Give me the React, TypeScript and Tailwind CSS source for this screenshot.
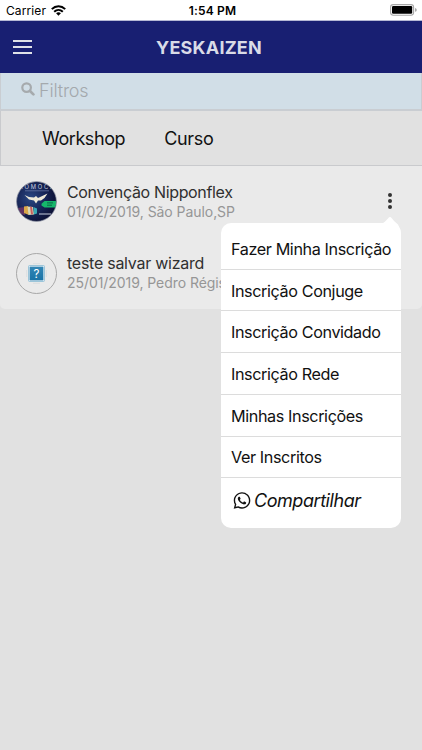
import React from "react";
import { FaWhatsapp } from "react-icons/fa";

const EVENTS = [
  { id: 1, title: "Convenção Nipponflex", info: "01/02/2019, São Paulo,SP", titleClass: "tracking-[-0.34px]" },
  { id: 2, title: "teste salvar wizard", info: "25/01/2019, Pedro Régis,PB", titleClass: "tracking-[-0.26px]" },
];

const MENU_ITEMS = [
  { label: "Fazer Minha Inscrição", className: "h-[46.5px] pt-[7px]" },
  { label: "Inscrição Conjuge", className: "h-[41.8px] pt-[2px]" },
  { label: "Inscrição Convidado", className: "h-[41.8px] pt-[1px]" },
  { label: "Inscrição Rede", className: "h-[41.8px] pt-[2px]" },
  { label: "Minhas Inscrições", className: "h-[41.8px] pt-[2px]" },
  { label: "Ver Inscritos", className: "h-[41.8px] pt-[1px]" },
];

const WifiIcon = () => (
  <svg width="15" height="11" viewBox="0 0 15 11" fill="none" stroke="#000" strokeWidth="2">
    <path d="M0.8 4.1C4.6 0.3 10.4 0.3 14.2 4.1" />
    <path d="M3.2 6.7C5.7 4.3 9.3 4.3 11.8 6.7" />
    <path d="M7.5 10.7L5.1 8.3C6.5 7 8.5 7 9.9 8.3Z" fill="#000" stroke="none" />
  </svg>
);

const BatteryIcon = () => (
  <svg width="28" height="12" viewBox="0 0 28 12">
    <rect x="0.6" y="0.6" width="23" height="10.6" rx="2.6" fill="none" stroke="#a8a8a8" strokeWidth="1.1" />
    <rect x="2" y="2" width="20.2" height="7.8" rx="1.2" fill="#000" />
    <path d="M25 4Q26.8 4.4 26.8 5.9T25 7.8Z" fill="#a8a8a8" />
  </svg>
);

const SearchIcon = () => (
  <svg className="mb-[2px] mr-[4px]" width="14" height="14" viewBox="0 0 14 14" fill="none" stroke="#a6aaad">
    <circle cx="5.6" cy="5.6" r="4.3" strokeWidth="2.2" />
    <path d="M9 9L12.4 12.4" strokeWidth="2.7" strokeLinecap="round" />
  </svg>
);

const EventAvatar = () => (
  <svg width="41" height="41" viewBox="0 0 41 41">
    <defs>
      <clipPath id="avatar">
        <circle cx="20.5" cy="20.5" r="19.8" />
      </clipPath>
      <radialGradient id="sky" cx="0.36" cy="0.42" r="0.6">
        <stop offset="0" stopColor="#294783" />
        <stop offset="0.6" stopColor="#172556" />
        <stop offset="1" stopColor="#0d1238" />
      </radialGradient>
    </defs>
    <g clipPath="url(#avatar)">
      <rect width="41" height="41" fill="url(#sky)" />
      <text x="3" y="7.8" fontSize="5.8" fontFamily="Inter, sans-serif" fill="#c6cde0" textLength="35">ROMOCA</text>
      <path d="M9 9.8H33" stroke="#7181ad" strokeWidth="0.7" />
      <path d="M8.5 14L13 16L18 16.5L20 15L22 17L31.5 12.5L28.5 17L25 19.5L22 19.5L20 22.5L18 19.5L13 18.5Z" fill="#ede9d8" />
      <path d="M25.5 22.8L28.5 20H41V26.5H28.5L25.5 24.5Z" fill="#15b86b" />
      <path d="M31 21.9H37M31 24.2H36" stroke="#0b6748" strokeWidth="1" />
      <path d="M1 27L9 26V34L4 33Z" fill="#613360" />
      <path d="M8 25.5L12 25L13 34L8 32Z" fill="#d9a84a" />
      <path d="M11.5 25.5L17 26L18 33.5L12.5 34Z" fill="#d9d6b4" />
      <path d="M14 25.5L16 26L17 33L15 33.5Z" fill="#c95f60" />
      <path d="M17.5 26L21 27.5V32.5L18 33.5Z" fill="#38a8b5" />
      <path d="M23 33H35" stroke="#c6cddd" strokeWidth="1" />
    </g>
    <circle cx="20.5" cy="20.5" r="19.9" fill="none" stroke="#777c91" strokeWidth="0.7" />
  </svg>
);

const PlaceholderAvatar = () => (
  <svg width="41" height="41" viewBox="0 0 41 41">
    <defs>
      <linearGradient id="tile" x1="0" y1="0" x2="0" y2="1">
        <stop offset="0" stopColor="#3386b5" />
        <stop offset="1" stopColor="#1973a6" />
      </linearGradient>
    </defs>
    <circle cx="20.5" cy="20.5" r="20" fill="none" stroke="#a0a0a0" strokeWidth="0.9" />
    <path d="M17 10.7H24M17 30.3H24M10.7 17V24M30.3 17V24" stroke="#d6dadd" strokeWidth="0.8" />
    <rect x="12.5" y="12.5" width="16" height="16" rx="1" fill="#f4fafd" stroke="#87b9d2" strokeWidth="0.8" />
    <rect x="13.6" y="13.6" width="13.8" height="13.8" fill="url(#tile)" />
    <text x="20.5" y="24.6" textAnchor="middle" fontSize="11.5" fontFamily="Inter, sans-serif" fill="#fff">?</text>
  </svg>
);

const ActionMenu = () => (
  <div className="absolute left-[221px] top-[223px] w-[180px] text-[16.2px] text-[#111]">
    <svg className="absolute left-[160px] -top-[7px]" width="20" height="20" viewBox="0 0 20 20">
      <path d="M0 7.5C3 7.2 5 4.7 7.2 2.2Q9 0 10.8 2.2Q13 5.5 17 8.5L19.5 14V20H0Z" fill="#fff" />
    </svg>
    <div className="relative h-[304.5px] overflow-hidden rounded-[10px] bg-white">
      {MENU_ITEMS.map((item) => (
        <div key={item.label} className={`flex items-center whitespace-nowrap border-b border-[#dcdcdc] pl-[10px] tracking-[-0.4px] ${item.className}`}>
          {item.label}
        </div>
      ))}
      <div className="flex h-[45px] items-center pl-[12px]">
        <FaWhatsapp className="mr-[3px] h-[19px] w-[18px]" />
        <span className="text-[18px] italic tracking-[-0.45px]">Compartilhar</span>
      </div>
    </div>
  </div>
);

const App = () => {
  return (
    <div className="relative h-[750px] w-[422px] overflow-hidden bg-[#e1e1e1] font-['Inter',sans-serif]">
      {/* Status bar */}
      <div className="grid h-[21px] grid-cols-3 items-center border-b border-[#b5b9d5] bg-white pl-[6px] pr-[4px] text-[12px] text-black">
        <div className="flex items-center gap-[5px] pt-px">
          <span className="tracking-[0.1px]">Carrier</span>
          <WifiIcon />
        </div>
        <span className="pl-px pt-px text-center text-[12px] font-semibold tracking-[0.2px]">1:54 PM</span>
        <div className="flex justify-end">
          <BatteryIcon />
        </div>
      </div>

      {/* Header */}
      <header className="grid h-[52px] grid-cols-3 items-center bg-[#181f72] pl-[13px] pr-[17px]">
        <button className="flex w-[19px] flex-col gap-[4px]">
          <span className="h-[2px] bg-[#dfe1e8]" />
          <span className="h-[2px] bg-[#dfe1e8]" />
          <span className="h-[2px] bg-[#dfe1e8]" />
        </button>
        <h1 className="text-center text-[18px] font-bold tracking-[0.22px] text-[#d9dbe7]">YESKAIZEN</h1>
      </header>

      {/* Filter */}
      <div className="flex h-[38px] items-center border-x border-b-2 border-[#c9cdd2] bg-[#d1dee7] pb-[2px] pl-[20px] text-[#a4a9ad]">
        <SearchIcon />
        <span className="text-[18px] font-light tracking-[-0.2px]">Filtros</span>
      </div>

      <nav className="flex h-[55px] items-center gap-[39px] border-b border-l border-[#c9cacd] pl-[41px] text-[18px] tracking-[-0.42px] text-[#111]">
        <span>Workshop</span>
        <span className="tracking-[-0.3px]">Curso</span>
      </nav>

      {/* Events */}
      <div className="h-[143px] rounded-b-[5px] bg-[#eaeaea]">
        {EVENTS.map((event) => (
          <div key={event.id} className="flex h-[71.5px] items-center pl-[15.5px]">
            {event.id === 1 ? <EventAvatar /> : <PlaceholderAvatar />}
            <div className="ml-[10.5px] flex-1 whitespace-nowrap">
              <div className={`text-[16px] leading-[20px] text-[#303030] ${event.titleClass}`}>{event.title}</div>
              <div className="text-[14px] leading-[20px] tracking-[-0.06px] text-[#969696]">{event.info}</div>
            </div>
            {event.id === 1 && (
              <div className="mb-[2px] mr-[30px] flex flex-col gap-[2px]">
                <span className="h-[4px] w-[4px] rounded-full bg-[#333]" />
                <span className="h-[4px] w-[4px] rounded-full bg-[#333]" />
                <span className="h-[4px] w-[4px] rounded-full bg-[#333]" />
              </div>
            )}
          </div>
        ))}
      </div>

      <ActionMenu />
    </div>
  );
};

export default App;
